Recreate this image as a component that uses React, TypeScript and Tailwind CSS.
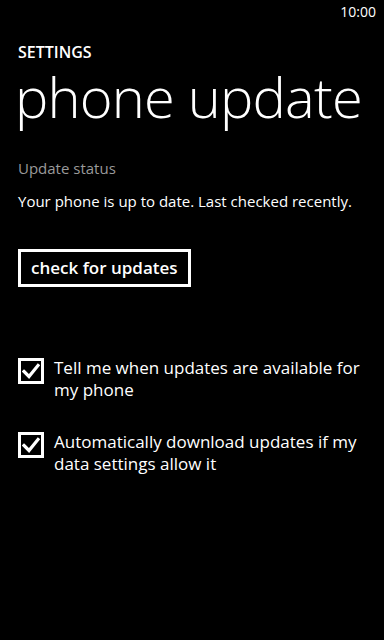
import React from "react";

function Check() {
  return (
    <div className="w-[26px] h-[26px] border-[3px] border-white flex items-center justify-center shrink-0 mt-[1px]">
      <svg width="18" height="16" viewBox="0 0 18 16">
        <path d="M2 8.5 L7 13.5 L16 2.5" stroke="white" strokeWidth="3.2" fill="none" strokeLinecap="square" />
      </svg>
    </div>
  );
}

export default function App() {
  return (
    <div className="w-[384px] h-[640px] bg-black text-white relative overflow-hidden" style={{ fontFamily: '"Open Sans", "Noto Sans", sans-serif' }}>
      <div className="flex justify-end pr-[8px] pt-[2px] text-[14px] leading-[20px]">10:00</div>
      <div className="pl-[18px] pt-[24px]">
        <div className="text-[16px] font-semibold leading-[12px] tracking-[0px]">SETTINGS</div>
        <div className="text-[56px] font-light leading-[56px] tracking-[-0.8px] mt-[10px] ml-[-3px]">phone update</div>
        <div className="text-[15px] text-[#9a9a9a] leading-[20px] mt-[34px]">Update status</div>
        <div className="text-[15px] leading-[20px] mt-[13px]">Your phone is up to date. Last checked recently.</div>
        <button className="mt-[38px] border-[3px] border-white h-[38px] px-[10px] text-[17px] font-semibold leading-[20px]">check for updates</button>
        <div className="mt-[70px] flex gap-[10px] items-start">
          <Check />
          <div className="text-[17px] leading-[22px] pr-[16px]">Tell me when updates are available for my phone</div>
        </div>
        <div className="mt-[30px] flex gap-[10px] items-start">
          <Check />
          <div className="text-[17px] leading-[22px] pr-[16px]">Automatically download updates if my data settings allow it</div>
        </div>
      </div>
    </div>
  );
}
